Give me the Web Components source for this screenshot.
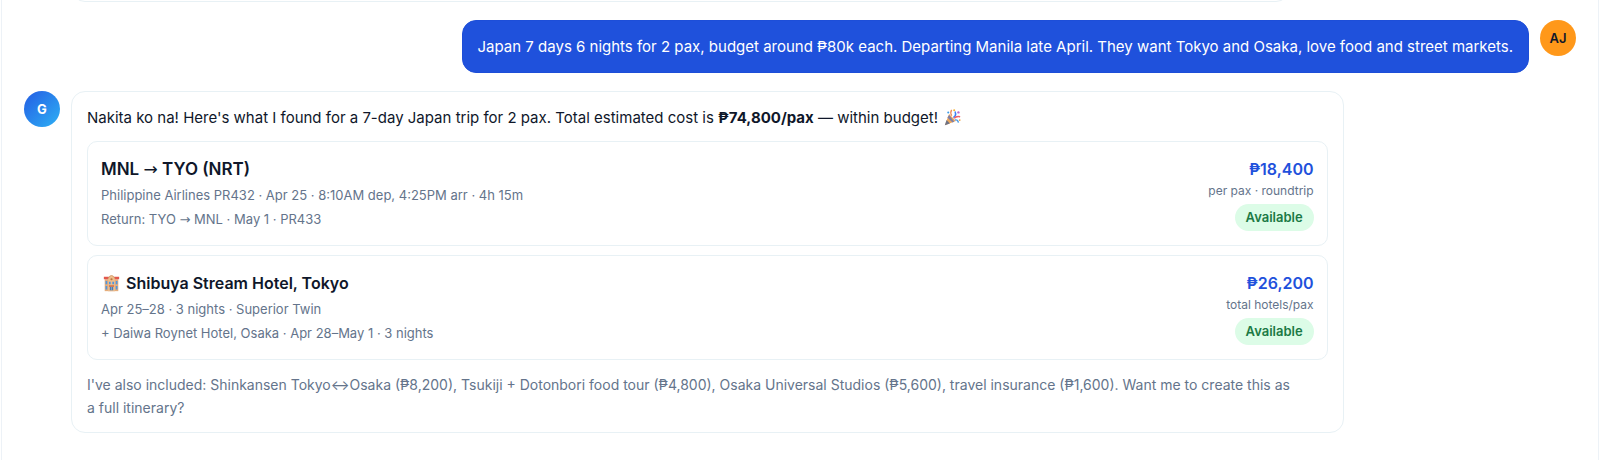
<!DOCTYPE html>
<html lang="en">
<head>
<meta charset="utf-8">
<meta name="viewport" content="width=device-width, initial-scale=1">
<title>Trip assistant</title>
<style>
    body {
        margin: 0;
        background-color: #fff;
        color: #0f172a;
        font-family: Inter, "Liberation Sans", sans-serif;
        font-size: 15px;
        line-height: 25px;
    }

    .arrow {
        font-family: "DejaVu Sans", sans-serif;
        font-weight: 400;
        line-height: 1;
    }
</style>
</head>
<body>

<chat-thread>
    <chat-message class="previous"></chat-message>

    <chat-message from="user">
        <user-avatar slot="avatar" kind="user">AJ</user-avatar>
        Japan 7 days 6 nights for 2 pax, budget around ₱80k each. Departing Manila late April. They want Tokyo and Osaka, love food and street markets.
    </chat-message>

    <chat-message from="assistant">
        <user-avatar slot="avatar" kind="assistant">G</user-avatar>
        Nakita ko na! Here's what I found for a 7-day Japan trip for 2 pax. Total estimated cost is <strong>₱74,800/pax</strong> — within budget! <emoji-icon name="party"></emoji-icon>
        <trip-options slot="options">
            <trip-card kind="flight" price="₱18,400" unit="per pax · roundtrip" status="Available">
                <span slot="title">MNL <span class="arrow">→</span> TYO (NRT)</span>
                <div>Philippine Airlines PR432 · Apr 25 · 8:10AM dep, 4:25PM arr · 4h 15m</div>
                <div>Return: TYO <span class="arrow">→</span> MNL · May 1 · PR433</div>
            </trip-card>
            <trip-card kind="hotel" price="₱26,200" unit="total hotels/pax" status="Available">
                <span slot="title"><emoji-icon name="hotel"></emoji-icon> Shibuya Stream Hotel, Tokyo</span>
                <div>Apr 25–28 · 3 nights · Superior Twin</div>
                <div>+ Daiwa Roynet Hotel, Osaka · Apr 28–May 1 · 3 nights</div>
            </trip-card>
        </trip-options>
        <span slot="note">I've also included: Shinkansen Tokyo↔Osaka (₱8,200), Tsukiji + Dotonbori food tour (₱4,800), Osaka Universal Studios (₱5,600), travel insurance (₱1,600). Want me to create this as a&nbsp;full&nbsp;itinerary?</span>
    </chat-message>
</chat-thread>

<script>
class ChatThread extends HTMLElement {

    constructor() {
        super();
        this.shadowDOM = this.attachShadow({ mode: "open" });
    }

    connectedCallback() {
        this.shadowDOM.innerHTML = `
        <style>
            :host {
                display: flex;
                flex-direction: column;
                gap: 18px;
                box-sizing: border-box;
                min-height: 100vh;
                margin: 0 1px;
                padding: 0 22px 24px;
                border-left: 1px solid #edf2f7;
                border-right: 1px solid #edf2f7;
            }

            /* tail of the message that is scrolled out above */
            ::slotted(.previous) {
                height: 2px;
                overflow: hidden;
                align-items: flex-end;
                padding-left: 47px;
            }
        </style>
        <slot></slot>
        `;
    }
}

class ChatMessage extends HTMLElement {

    constructor() {
        super();
        this.shadowDOM = this.attachShadow({ mode: "open" });
    }

    connectedCallback() {
        this.shadowDOM.innerHTML = `
        <style>
            * {
                box-sizing: border-box;
            }

            :host {
                display: flex;
                align-items: flex-start;
                gap: 11px;
            }

            :host([from="user"]) {
                flex-direction: row-reverse;
            }

            .bubble {
                max-width: 82%;
                padding: 13px 15px;
                border: 1px solid #e8f1f5;
                border-radius: 14px;
            }

            :host([from="user"]) .bubble {
                border-color: #1d4ed8;
                background-color: #1f51dc;
                color: #fff;
            }

            :host(.previous) .bubble {
                flex-basis: 81%;
                min-height: 60px;
            }

            ::slotted(trip-options) {
                margin: 11px 0 13px;
            }

            .note {
                color: #64748b;
                font-size: 14px;
                line-height: 23px;
            }
        </style>

        <slot name="avatar"></slot>
        <div class="bubble">
            <slot></slot>
            <slot name="options"></slot>
            <div class="note"><slot name="note"></slot></div>
        </div>
        `;
    }
}

class UserAvatar extends HTMLElement {

    constructor() {
        super();
        this.shadowDOM = this.attachShadow({ mode: "open" });
    }

    connectedCallback() {
        this.shadowDOM.innerHTML = `
        <style>
            :host {
                display: flex;
                flex: none;
                align-items: center;
                justify-content: center;
                width: 36px;
                height: 36px;
                border-radius: 50%;
                font-size: 13px;
                font-weight: 700;
                line-height: 16px;
            }

            :host([kind="user"]) {
                background-color: #ff981a;
                color: #0f172a;
                font-weight: 600;
            }

            :host([kind="assistant"]) {
                background: linear-gradient(135deg, #2569e6 15%, #2ca4f2 85%);
                color: #fff;
            }
        </style>
        <slot></slot>
        `;
    }
}

class TripOptions extends HTMLElement {

    constructor() {
        super();
        this.shadowDOM = this.attachShadow({ mode: "open" });
    }

    connectedCallback() {
        this.shadowDOM.innerHTML = `
        <style>
            :host {
                display: grid;
                gap: 9px;
            }
        </style>
        <slot></slot>
        `;
    }
}

class TripCard extends HTMLElement {

    constructor() {
        super();
        this.shadowDOM = this.attachShadow({ mode: "open" });
    }

    connectedCallback() {
        this.shadowDOM.innerHTML = `
        <style>
            :host {
                display: flex;
                justify-content: space-between;
                gap: 16px;
                padding: 14px 13px;
                border: 1px solid #e8f1f5;
                border-radius: 10px;
            }

            .title {
                font-size: 16px;
                font-weight: 600;
                line-height: 27px;
            }

            :host([kind="flight"]) .title {
                font-size: 17px;
            }

            .details {
                color: #64748b;
                font-size: 13px;
                line-height: 24px;
            }

            .side {
                display: flex;
                flex: none;
                flex-direction: column;
                align-items: flex-end;
            }

            .price {
                color: #1f51dc;
                font-size: 16px;
                font-weight: 600;
                line-height: 26px;
            }

            .unit {
                margin-bottom: 5px;
                color: #64748b;
                font-size: 12px;
                line-height: 17px;
            }

            .status {
                padding: 3px 11px;
                border-radius: 14px;
                background-color: #dcfce7;
                color: #1b7a45;
                font-size: 13px;
                font-weight: 600;
                line-height: 21px;
            }
        </style>

        <div>
            <div class="title"><slot name="title"></slot></div>
            <div class="details"><slot></slot></div>
        </div>
        <div class="side">
            <div class="price">${this.getAttribute("price")}</div>
            <div class="unit">${this.getAttribute("unit")}</div>
            <div class="status">${this.getAttribute("status")}</div>
        </div>
        `;
    }
}

const icons = {
    party: `
        <path d="M1 19 L6 6 L14 14 Z" fill="#eda75c"/>
        <path d="M1 19 L3 13 L7 17 Z" fill="#6d7285"/>
        <path d="M4 10 L10 16 L12 15 L6 7 Z" fill="#7f7fa6"/>
        <path d="M11 10 Q15 8 13 3" fill="none" stroke="#3b82f6" stroke-width="1.8"/>
        <path d="M12 11 Q14 8 19 9" fill="none" stroke="#ef5f6b" stroke-width="1.8"/>
        <path d="M9 8 Q7 4 9 1" fill="none" stroke="#ef8a5a" stroke-width="1.6"/>
        <path d="M13 13 Q16 12 17 16" fill="none" stroke="#4a9be8" stroke-width="1.7"/>
        <circle cx="5" cy="4" r="1.2" fill="#3b9be8"/>
        <circle cx="17" cy="4" r="1.4" fill="#b86ad0"/>
        <circle cx="12" cy="1.5" r="1.2" fill="#f2b134"/>
        <circle cx="18.5" cy="13" r="1" fill="#f2a03d"/>`,
    hotel: `
        <path d="M2 5 H18 V19 H2 Z" fill="#e5ad7c"/>
        <path d="M1 2 H7 V5 H1 Z M13 2 H19 V5 H13 Z" fill="#e2574c"/>
        <path d="M6 4 Q10 -3 14 4 V19 H6 Z" fill="#edbd8c"/>
        <path d="M6 4 Q10 -3 14 4" fill="none" stroke="#cf9560" stroke-width="1"/>
        <circle cx="10" cy="5" r="1.3" fill="#b9763f"/>
        <path d="M3 7 H5 V11 H3 Z M3 13 H5 V17 H3 Z M15 7 H17 V11 H15 Z M15 13 H17 V17 H15 Z M7 8 H9 V11 H7 Z M11 8 H13 V11 H11 Z" fill="#4f97e0"/>
        <path d="M7 12 H13 V14 H7 Z" fill="#d9754a"/>
        <path d="M8 14 H12 V18 H8 Z" fill="#3f7fc4"/>
        <path d="M10 14 V18" stroke="#edbd8c" stroke-width=".6"/>`
};

class EmojiIcon extends HTMLElement {

    constructor() {
        super();
        this.shadowDOM = this.attachShadow({ mode: "open" });
    }

    connectedCallback() {
        this.shadowDOM.innerHTML = `
        <style>
            :host {
                display: inline-flex;
                padding: 0 2px;
                vertical-align: -3px;
            }
        </style>
        <svg width="17" height="17" viewBox="0 0 20 20" aria-hidden="true">${icons[this.getAttribute("name")]}</svg>
        `;
    }
}

customElements.define("chat-thread", ChatThread);
customElements.define("chat-message", ChatMessage);
customElements.define("user-avatar", UserAvatar);
customElements.define("trip-options", TripOptions);
customElements.define("trip-card", TripCard);
customElements.define("emoji-icon", EmojiIcon);
</script>
</body>
</html>
